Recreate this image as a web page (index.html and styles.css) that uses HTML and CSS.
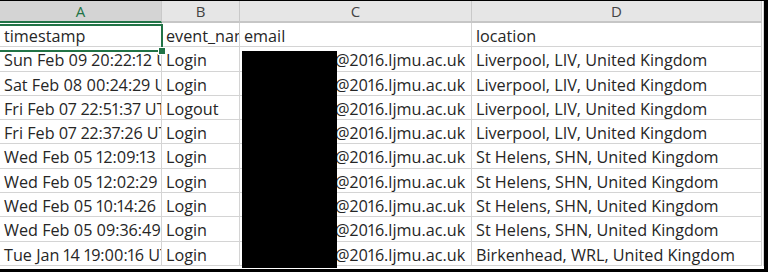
FILE: index.html
```html
<!DOCTYPE html>
<html>
<head>
<meta charset="utf-8">
<link rel="stylesheet" href="styles.css">
</head>
<body>
<div class="sheet">
  <div class="grid">
    <div class="hd sel">A</div><div class="hd">B</div><div class="hd">C</div><div class="hd">D</div>

    <div class="c">timestamp</div><div class="c">event_name</div><div class="c">email</div><div class="c">location</div>

    <div class="c">Sun Feb 09 20:22:12 UTC 2020</div><div class="c">Login</div><div class="c em">@2016.ljmu.ac.uk</div><div class="c">Liverpool, LIV, United Kingdom</div>
    <div class="c">Sat Feb 08 00:24:29 UTC 2020</div><div class="c">Login</div><div class="c em">@2016.ljmu.ac.uk</div><div class="c">Liverpool, LIV, United Kingdom</div>
    <div class="c">Fri Feb 07 22:51:37 UTC 2020</div><div class="c">Logout</div><div class="c em">@2016.ljmu.ac.uk</div><div class="c">Liverpool, LIV, United Kingdom</div>
    <div class="c">Fri Feb 07 22:37:26 UTC 2020</div><div class="c">Login</div><div class="c em">@2016.ljmu.ac.uk</div><div class="c">Liverpool, LIV, United Kingdom</div>
    <div class="c">Wed Feb 05 12:09:13</div><div class="c">Login</div><div class="c em">@2016.ljmu.ac.uk</div><div class="c">St Helens, SHN, United Kingdom</div>
    <div class="c">Wed Feb 05 12:02:29</div><div class="c">Login</div><div class="c em">@2016.ljmu.ac.uk</div><div class="c">St Helens, SHN, United Kingdom</div>
    <div class="c">Wed Feb 05 10:14:26</div><div class="c">Login</div><div class="c em">@2016.ljmu.ac.uk</div><div class="c">St Helens, SHN, United Kingdom</div>
    <div class="c">Wed Feb 05 09:36:49</div><div class="c">Login</div><div class="c em">@2016.ljmu.ac.uk</div><div class="c">St Helens, SHN, United Kingdom</div>
    <div class="c">Tue Jan 14 19:00:16 UTC 2020</div><div class="c">Login</div><div class="c em">@2016.ljmu.ac.uk</div><div class="c">Birkenhead, WRL, United Kingdom</div>
  </div>
  <div class="selbox"><span class="handle"></span></div>
  <div class="redact"></div>
</div>
</body>
</html>
```

FILE: styles.css
```css
html, body {
  margin: 0;
  padding: 0;
  background: #000;
  width: 768px;
  height: 272px;
  overflow: hidden;
}
.sheet {
  position: relative;
  margin-top: 1px;
  width: 764px;
  height: 268px;
  background: #fff;
  overflow: hidden;
}
.grid {
  display: grid;
  grid-template-columns: 162px 78px 232px 290px;
  grid-template-rows: 22px repeat(10, 24.3px);
  font-family: "Open Sans", Lato, sans-serif;
  font-size: 16.2px;
  font-variant-numeric: proportional-nums;
  color: #262626;
  border-right: 1px solid #d4d4d4;
  width: 763px;
}
.hd {
  background: #e6e6e6;
  border-right: 1px solid #c9c9c9;
  border-bottom: 2px solid #c6c6c6;
  text-align: center;
  line-height: 21px;
  color: #444;
  font-size: 15px;
}
.hd.sel {
  background: #d4d4d4;
  color: #217346;
  border-bottom-color: #217346;
}
.c {
  white-space: nowrap;
  overflow: hidden;
  border-right: 1px solid #d4d4d4;
  border-bottom: 1px solid #d4d4d4;
  padding-left: 4px;
  padding-top: 2px;
  line-height: 22px;
}
.em {
  padding-left: 95px;
}
.selbox {
  position: absolute;
  left: 0;
  top: 23px;
  width: 161px;
  height: 24px;
  border: 2px solid #217346;
  border-left: none;
  pointer-events: none;
}
.handle {
  position: absolute;
  right: -5px;
  bottom: -5px;
  width: 6px;
  height: 6px;
  background: #217346;
  border: 1px solid #fff;
}
.redact {
  position: absolute;
  left: 242px;
  top: 50px;
  width: 95px;
  height: 217px;
  background: #000;
}
```
